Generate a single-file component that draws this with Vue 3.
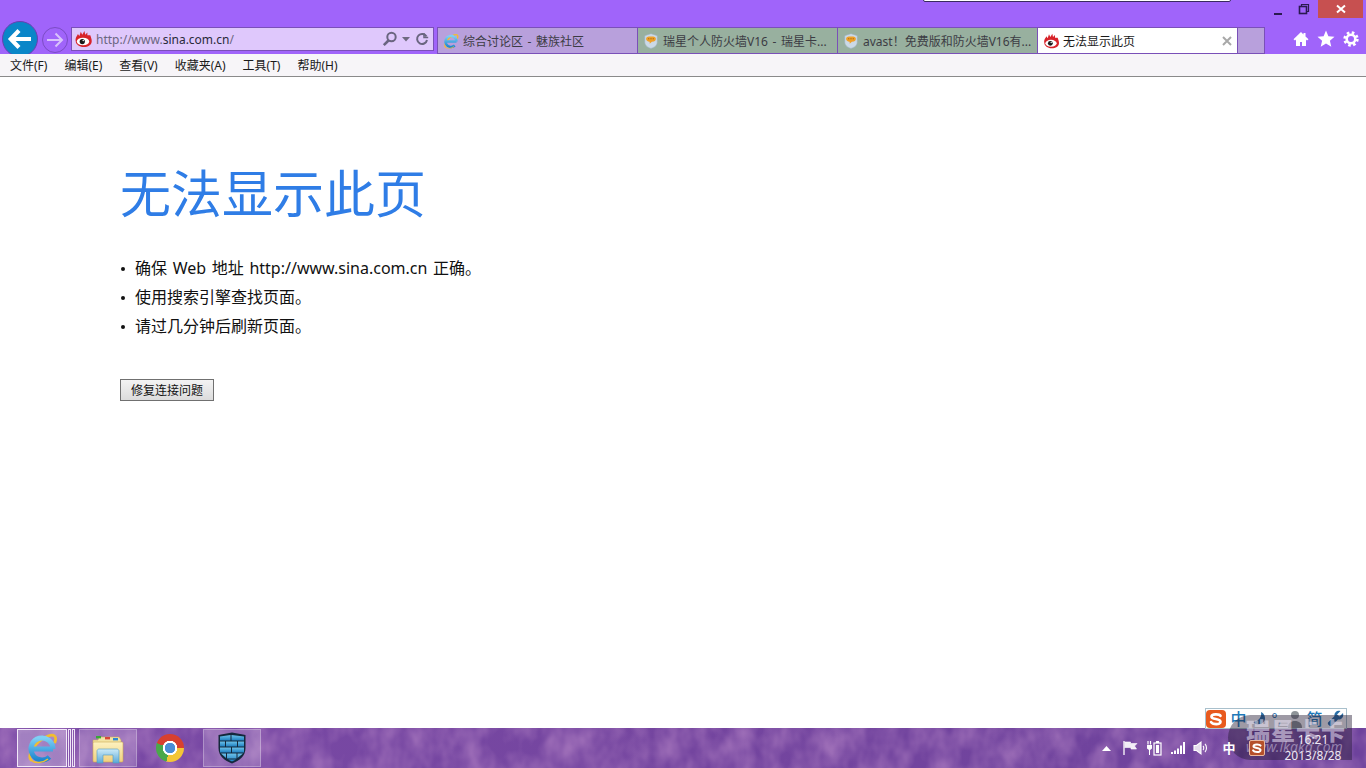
<script setup>
const menus = ['文件(F)', '编辑(E)', '查看(V)', '收藏夹(A)', '工具(T)', '帮助(H)']
const tabs = [
  { title: '综合讨论区 - 魅族社区', icon: 'ie', kind: 'lilac' },
  { title: '瑞星个人防火墙V16 - 瑞星卡...', icon: 'chat', kind: 'green' },
  { title: 'avast！免费版和防火墙V16有...', icon: 'chat', kind: 'green' },
  { title: '无法显示此页', icon: 'sina', kind: 'active' }
]
const tips = ['确保 Web 地址 http://www.sina.com.cn 正确。', '使用搜索引擎查找页面。', '请过几分钟后刷新页面。']
</script>

<template>
  <div class="screen">
    <svg class="defs" width="0" height="0" aria-hidden="true">
      <defs>
        <linearGradient id="ieBlue" x1="0" y1="0" x2="0" y2="1">
          <stop offset="0" stop-color="#7fd0f5" />
          <stop offset="1" stop-color="#1c86d0" />
        </linearGradient>
        <linearGradient id="stand" x1="0" y1="0" x2="0" y2="1">
          <stop offset="0" stop-color="#cdebf7" />
          <stop offset="1" stop-color="#5aa8d8" />
        </linearGradient>
        <linearGradient id="brick" x1="0" y1="0" x2="0" y2="1">
          <stop offset="0" stop-color="#6cc2ea" />
          <stop offset="1" stop-color="#1f7fc0" />
        </linearGradient>
        <linearGradient id="folder" x1="0" y1="0" x2="0" y2="1">
          <stop offset="0" stop-color="#fdf2c0" />
          <stop offset="1" stop-color="#f0d080" />
        </linearGradient>
        <symbol id="i-sina" viewBox="0 0 24 22">
          <path d="M2 14C1 9 4 7 5 4L7 7 9 1l2 4 3-5 1 5 3-3v4l4 0c1 3 2 5 2 8 0 5-5 8-11 8S2 18 2 14Z" fill="#d8232a" />
          <ellipse cx="12" cy="14.500" rx="8.500" ry="5.200" fill="#fff" />
          <circle cx="11" cy="14.500" r="3.600" fill="#1a1a1a" />
          <circle cx="12.300" cy="13.200" r="1" fill="#fff" />
        </symbol>
        <symbol id="i-ie" viewBox="0 0 32 32">
          <path d="M5 28C1 24 9 9 22 4c6-2 9 0 7 6" fill="none" stroke="#f0bd32" stroke-width="2.800" stroke-linecap="round" />
          <path d="M7 17H27M27 17A11 11 0 1 0 23.500 25" fill="none" stroke="url(#ieBlue)" stroke-width="5" />
          <path d="M22 27C17 31 9 32 5 28" fill="none" stroke="#f0bd32" stroke-width="1.600" />
        </symbol>
        <symbol id="i-chat" viewBox="0 0 16 18">
          <path d="M1 3 8 .8 15 3v7c0 4-3 6-7 7.400C4 16 1 14 1 10Z" fill="#cbd9e6" stroke="#9db2c4" stroke-width=".6" />
          <path d="M2.500 6.500C2.500 4.500 4 4 8 4s5.500.5 5.500 2.500S12 9.800 9 9.800L6.500 12V9.800C4 9.600 2.500 8.500 2.500 6.500Z" fill="#f0a028" />
          <path d="M5 6.500h6" stroke="#7a4a10" stroke-width="1" stroke-dasharray="1 1.500" />
        </symbol>
        <symbol id="i-sogou" viewBox="0 0 20 20">
          <path d="M15 6.500C14 4.500 5 4 5 7.500s10 1.500 10 5.500-9 3-10.500.5" fill="none" stroke="#fff" stroke-width="3" stroke-linecap="round" />
        </symbol>
      </defs>
    </svg>

    <header class="chrome">
      <div class="caption">
        <div class="other-window"></div>
        <div class="window-buttons">
          <span class="win-btn">
            <svg width="10" height="10" viewBox="0 0 10 10"><rect x="1" y="7" width="8" height="2" fill="#2a1a50" /></svg>
          </span>
          <span class="win-btn">
            <svg width="12" height="12" viewBox="0 0 12 12" fill="none" stroke="#2a1a50" stroke-width="1.200"><rect x="1.500" y="3.500" width="7" height="7" stroke-width="1.600" /><path d="M3.500 3V1.500h7v7H9" /></svg>
          </span>
          <span class="win-close">
            <svg width="10" height="10" viewBox="0 0 10 10" stroke="#fff" stroke-width="2"><path d="M1 1.500 9 8.500M9 1.500 1 8.500" /></svg>
          </span>
        </div>
      </div>

      <div class="navbar">
        <button class="back" aria-label="后退">
          <svg width="26" height="24" viewBox="0 0 26 24" fill="none" stroke="#fff" stroke-width="4.200" stroke-linejoin="miter"><path d="M12 3.500 3.800 12l8.200 8.500M4.500 12H24" /></svg>
        </button>
        <button class="forward" aria-label="前进">
          <svg width="18" height="16" viewBox="0 0 18 16" fill="none" stroke="#d9c3fb" stroke-width="2"><path d="M9.500 1.500 16 8l-6.500 6.500M15.500 8H1" /></svg>
        </button>
        <div class="address">
          <svg class="fav" width="18" height="16"><use href="#i-sina" /></svg>
          <span class="url">http://www.<b>sina.com.cn</b>/</span>
          <svg class="addr-tool" width="16" height="16" viewBox="0 0 16 16" fill="none" stroke="#6a6580" stroke-width="2"><circle cx="9.500" cy="6" r="4.200" /><path d="M6.500 9.500 1.800 14.200" stroke-width="2.600" /></svg>
          <svg class="addr-drop" width="8" height="5" viewBox="0 0 8 5"><path d="M0 0h8L4 4.500Z" fill="#6f6a80" /></svg>
          <svg class="addr-reload" width="14" height="14" viewBox="0 0 14 14" fill="none" stroke="#6a6580" stroke-width="2"><path d="M11.500 4.500A5 5 0 1 0 12 8" /><path d="M9 1v4.500h4.200" stroke-width="1.500" /></svg>
        </div>

        <div class="tabs">
          <div v-for="tab in tabs" :key="tab.title" class="tab" :class="tab.kind">
            <svg class="tab-icon" width="16" height="16"><use :href="'#i-' + tab.icon" /></svg>
            <span class="tab-title">{{ tab.title }}</span>
            <svg v-if="tab.kind === 'active'" class="tab-close" width="10" height="10" viewBox="0 0 10 10" stroke="#a8a8a8" stroke-width="2"><path d="M1 1l8 8M9 1 1 9" /></svg>
          </div>
          <div class="tab new-tab"></div>
        </div>

        <div class="tools">
          <svg width="16" height="16" viewBox="0 0 16 16" fill="#fff"><path d="M8 1 .5 8.200 2 9.500l1-.9V15h4v-4h2v4h4V8.600l1 .9 1.500-1.300L12.500 5.500V2h-2v1.600Z" /></svg>
          <svg width="18" height="17" viewBox="0 0 18 17" fill="#fff"><path d="M9 .5l2.400 5.700 6.100.5-4.600 4 1.400 6L9 13.500 3.700 16.700l1.400-6-4.600-4 6.100-.5Z" /></svg>
          <svg width="16" height="16" viewBox="0 0 16 16" fill="none" stroke="#fff"><circle cx="8" cy="8" r="4.300" stroke-width="2.600" /><circle cx="8" cy="8" r="6.200" stroke-width="3" stroke-dasharray="2.500 2.370" /></svg>
        </div>
      </div>
    </header>

    <nav class="menubar">
      <span v-for="m in menus" :key="m" class="menu-item">{{ m }}</span>
    </nav>

    <main class="page">
      <h1>无法显示此页</h1>
      <ul>
        <li v-for="t in tips" :key="t">{{ t }}</li>
      </ul>
      <button class="fix">修复连接问题</button>
    </main>

    <footer class="taskbar">
      <svg class="texture" width="1366" height="40" aria-hidden="true">
        <filter id="rock" x="0" y="0" width="100%" height="100%">
          <feTurbulence type="fractalNoise" baseFrequency="0.045 0.03" numOctaves="3" seed="11" />
          <feColorMatrix values="0 0 0 0 0.62  0 0 0 0 0.34  0 0 0 0 0.66  0.8 0 0 0 -0.25" />
        </filter>
        <rect width="1366" height="40" filter="url(#rock)" />
      </svg>

      <div class="task current">
        <svg width="32" height="32"><use href="#i-ie" /></svg>
      </div>
      <span class="sliver"></span>
      <span class="sliver"></span>
      <div class="task pinned explorer">
        <svg width="34" height="32" viewBox="0 0 34 32">
          <path d="M2 8h5l1-3h20l2 3v3H2Z" fill="#f3e4a4" stroke="#c8a860" stroke-width=".6" />
          <rect x="5" y="4" width="5" height="2.400" fill="#38a838" />
          <rect x="14" y="5" width="5" height="2.400" fill="#d84838" />
          <rect x="22" y="6" width="5" height="2.400" fill="#2f8ad0" />
          <rect x="2" y="10" width="30" height="20" rx="1" fill="url(#folder)" stroke="#cfa850" stroke-width=".6" />
          <path d="M6 31V19c0-1 1-2 2-2h18c1 0 2 1 2 2v12h-6v-8H12v8Z" fill="url(#stand)" stroke="#4f9cc4" stroke-width=".6" />
        </svg>
      </div>
      <div class="task plain"><span class="chrome-logo"></span></div>
      <div class="task pinned shield">
        <svg width="30" height="32" viewBox="0 0 30 32">
          <path d="M15 .5 28.500 3V16c0 8-6 12.500-13.500 15.500C7.500 28.500 1.500 24 1.500 16V3Z" fill="#14283c" />
          <g fill="url(#brick)">
            <path d="M3 4.500 13.500 3V8.500H3ZM14.500 3 27 4.500V8.500H14.500Z" />
            <rect x="3" y="9.500" width="5" height="5" /><rect x="9" y="9.500" width="11" height="5" /><rect x="21" y="9.500" width="6" height="5" />
            <rect x="3" y="15.500" width="11" height="5" /><rect x="15" y="15.500" width="12" height="5" />
            <path d="M4 21.500h5v4.500ZM10 21.500h9.500v5H10ZM20.500 21.500H26L20.500 26ZM11 27.500h8L15 29.500Z" />
          </g>
        </svg>
      </div>

      <div class="tray">
        <span class="tray-cell">
          <svg width="9" height="5" viewBox="0 0 9 5"><path d="M4.500 0 9 5H0Z" fill="#fff" /></svg>
        </span>
        <span class="tray-cell">
          <svg width="16" height="16" viewBox="0 0 16 16" fill="none" stroke="#fff" stroke-width="1.300"><path d="M2 1v14" /><path d="M2.500 2h6v1.500H15L12.500 6 14.500 9H9V7.500H2.500" fill="#fff" fill-opacity=".9" stroke-width=".6" /></svg>
        </span>
        <span class="tray-cell">
          <svg width="16" height="16" viewBox="0 0 16 16" fill="none" stroke="#fff"><path d="M2 1v3.500M4.500 1v3.500" stroke-width="1.200" /><path d="M1 5h5v3.500L4 10v5H3v-5L1 8.500Z" fill="#fff" stroke="none" /><rect x="8" y="3" width="7" height="12" stroke-width="1.200" /><rect x="10" y="1" width="3" height="2" fill="#fff" stroke="none" /><rect x="10" y="5" width="3" height="8" fill="#fff" stroke="none" /></svg>
        </span>
        <span class="tray-cell">
          <svg width="16" height="14" viewBox="0 0 16 14" fill="#fff"><rect x="1" y="11" width="2" height="2" /><rect x="4" y="9.500" width="2" height="3.500" /><rect x="7" y="7.500" width="2" height="5.500" /><rect x="10" y="4.500" width="2" height="8.500" /><rect x="13" y="1" width="2" height="12" /></svg>
        </span>
        <span class="tray-cell">
          <svg width="16" height="16" viewBox="0 0 16 16" fill="none" stroke="#fff" stroke-width="1.100"><path d="M1 5.500h2.500L8 2v12L3.500 10.500H1Z" fill="#fff" fill-opacity=".8" /><path d="M10 6c1 1 1 3 0 4M12 4c2 2 2 6 0 8" /></svg>
        </span>
        <span class="tray-cell ime-state">中</span>
        <span class="tray-cell">
          <svg class="sogou-tray" width="16" height="16"><use href="#i-sogou" /></svg>
        </span>
        <div class="clock">
          <span>16:21</span>
          <span>2013/8/28</span>
        </div>
      </div>
    </footer>

    <div class="watermark">
      <span class="wm-title">瑞星卡卡</span>
      <span class="wm-url">www.ikaka.com</span>
    </div>

    <div class="ime">
      <svg class="ime-logo" width="20" height="18"><use href="#i-sogou" /></svg>
      <span class="ime-word">中</span>
      <svg width="16" height="16" viewBox="0 0 16 16"><path d="M10 1c1 5-2 9-8 10 3 4 11 3 12-3 .4-3-1.500-6-4-7Z" fill="#2a6fa8" /></svg>
      <span class="ime-mark">°,</span>
      <svg width="14" height="18" viewBox="0 0 14 18" fill="#8e9498"><circle cx="7" cy="5" r="4" /><path d="M0 18c0-5 3-7 7-7s7 2 7 7Z" /></svg>
      <span class="ime-word">简</span>
      <svg width="17" height="17" viewBox="0 0 17 17" fill="#2a6fa8"><path d="M16 3 12.500 6.500 10 4.500 13.500 1C10.500 0 7 2 7.500 6L1 12.500c-1 1.500 2 4.500 3.500 3.500L11 9.500c4 .5 6-3 5-6.500Z" /></svg>
    </div>
  </div>
</template>

<style>
html, body { margin: 0; overflow: hidden; background: #fff; }
</style>

<style scoped>
.screen {
  position: relative;
  display: flex;
  flex-direction: column;
  width: 1366px;
  height: 768px;
  overflow: hidden;
  font-family: "Noto Sans", "Noto Sans CJK SC", sans-serif;
  color: #1a1a1a;
}
.defs { position: absolute; }

/* browser chrome */
.chrome {
  height: 54px;
  background: #a064fa;
  overflow: hidden;
  flex: none;
}
.caption {
  position: relative;
  height: 27px;
  display: flex;
  justify-content: flex-end;
}
.other-window {
  position: absolute;
  left: 923px;
  top: -4px;
  width: 306px;
  height: 4px;
  background: #fff;
  border: 1px solid #3a2a60;
  border-radius: 0 0 2px 2px;
}
.window-buttons {
  display: flex;
  align-items: flex-start;
  margin-right: 3px;
}
.win-btn {
  width: 20px;
  height: 18px;
  display: flex;
  align-items: center;
  justify-content: center;
}
.win-btn:nth-child(1) { margin-right: 6px; padding-top: 4px; height: 14px; }
.win-btn:nth-child(2) { margin-right: 4px; }
.win-close {
  width: 45px;
  height: 18px;
  background: #c75050;
  display: flex;
  align-items: center;
  justify-content: center;
}
.navbar {
  position: relative;
  display: flex;
  align-items: flex-start;
  height: 27px;
}
.back {
  position: absolute;
  left: 2px;
  top: -6px;
  width: 36px;
  height: 36px;
  padding: 0;
  border: 1px solid #6a3fb0;
  border-radius: 50%;
  background: #0a86c8;
  display: flex;
  align-items: center;
  justify-content: center;
}
.forward {
  position: absolute;
  left: 42px;
  top: 0;
  width: 26px;
  height: 26px;
  padding: 0;
  border: 1px solid #7b4cc4;
  border-radius: 50%;
  background: transparent;
  display: flex;
  align-items: center;
  justify-content: center;
}
.address {
  box-sizing: border-box;
  margin-left: 71px;
  width: 363px;
  height: 24px;
  border: 1px solid #7a50b8;
  background: #dfc8fc;
  display: flex;
  align-items: center;
  font-size: 13px;
  color: #6b6680;
}
.fav { margin-left: 2px; margin-right: 4px; flex: none; }
.url { flex: 1; white-space: nowrap; font-size: 12px; }
.url b { font-weight: 400; color: #2a2a3a; }
.addr-tool { margin-right: 1px; }
.addr-drop { margin-right: 5px; margin-left: 3px; }
.addr-reload { margin-right: 4px; }
.tabs {
  margin-left: 3px;
  display: flex;
  height: 27px;
}
.tab {
  box-sizing: border-box;
  width: 200px;
  height: 27px;
  border: 1px solid #7a50b8;
  border-right-width: 0;
  display: flex;
  align-items: center;
  padding-left: 5px;
  font-size: 12px;
  color: #3c3c44;
}
.tab.lilac, .tab.new-tab { background: #b8a0dc; }
.tab.green { background: #98b09f; }
.tab.active { background: #fff; color: #1a1a1a; }
.tab.new-tab { width: 28px; border-right-width: 1px; }
.tab-icon { flex: none; margin-right: 4px; }
.tab-title { flex: 1; white-space: nowrap; overflow: hidden; word-spacing: 1.500px; }
.tab-close { margin-right: 5px; }
.tools {
  margin-left: 28px;
  padding-top: 3px;
  display: flex;
  align-items: center;
  gap: 8px;
}

/* menu */
.menubar {
  box-sizing: border-box;
  flex: none;
  height: 23px;
  padding-left: 1.500px;
  background: #f7f5f8;
  border-bottom: 1px solid #8a8a8a;
  display: flex;
  align-items: center;
  font-size: 12px;
}
.menu-item { padding: 0 8.500px; white-space: nowrap; }

/* error page */
.page {
  flex: 1;
  background: #fff;
  padding: 83px 0 0 120px;
}
h1 {
  margin: 0;
  font-size: 51px;
  line-height: 66px;
  font-weight: 400;
  color: #2f7de6;
}
ul {
  margin: 28px 0 0;
  padding: 0;
  list-style: none;
  font-size: 16px;
  line-height: 29px;
  word-spacing: 1.500px;
  color: #111;
}
li {
  display: flex;
  align-items: center;
}
li::before {
  content: "";
  width: 4px;
  height: 4px;
  margin: 0 10px 0 1px;
  border-radius: 50%;
  background: #111;
  flex: none;
}
.fix {
  display: block;
  box-sizing: border-box;
  width: 94px;
  height: 22px;
  margin-top: 38px;
  padding: 0;
  border: 1px solid #707070;
  background: linear-gradient(#f3f3f3, #dcdcdc);
  font: 12px "Noto Sans", "Noto Sans CJK SC", sans-serif;
  color: #111;
}

/* taskbar */
.taskbar {
  position: relative;
  flex: none;
  height: 40px;
  box-sizing: border-box;
  padding-left: 17px;
  display: flex;
  align-items: center;
  background: linear-gradient(90deg, #7a4aa6, #74459f 50%, #6d429c);
}
.texture { position: absolute; left: 0; top: 0; }
.task {
  position: relative;
  box-sizing: border-box;
  height: 38px;
  display: flex;
  align-items: center;
  justify-content: center;
  flex: none;
}
.current {
  width: 50px;
  border: 1px solid #f2e8f8;
  background: rgba(255, 255, 255, .3);
}
.sliver {
  position: relative;
  box-sizing: border-box;
  width: 3px;
  height: 38px;
  margin-left: 1px;
  border: 1px solid #efe4f6;
  flex: none;
}
.pinned {
  border: 1px solid rgba(255, 255, 255, .28);
  background: rgba(255, 255, 255, .17);
  width: 58px;
}
.explorer { margin-left: 4px; }
.plain { width: 66px; }
.chrome-logo {
  width: 28px;
  height: 28px;
  border-radius: 50%;
  background:
    radial-gradient(circle, #4a8ed6 0 5px, #fff 5.500px 7px, transparent 7.500px),
    conic-gradient(from 290deg, #d8402e 0 160deg, #f4c636 160deg 265deg, #4aa84a 265deg 360deg);
}
.tray {
  position: relative;
  z-index: 4;
  margin-left: auto;
  margin-right: 23px;
  display: flex;
  align-items: center;
  height: 40px;
}
.tray-cell {
  width: 24px;
  display: flex;
  align-items: center;
  justify-content: center;
  flex: none;
}
.tray-cell:nth-child(4) { width: 23px; }
.tray-cell:nth-child(5) { margin-right: 2px; }
.tray-cell:nth-child(6), .tray-cell:nth-child(7) { width: 28px; }
.ime-state {
  color: #fff;
  font-size: 13px;
  line-height: 16px;
  font-weight: 700;
}
.sogou-tray {
  background: #b5502a;
  border: 1px solid #e8b8a0;
  box-sizing: border-box;
  border-radius: 2px;
}
.clock {
  width: 60px;
  margin-left: 12px;
  display: flex;
  flex-direction: column;
  align-items: center;
  font-size: 12px;
  line-height: 16px;
  color: #efe8f4;
  white-space: nowrap;
}

/* floating overlays */
.watermark {
  position: absolute;
  left: 1228px;
  top: 715px;
  box-sizing: border-box;
  width: 124px;
  height: 45px;
  padding: 3px 0 0 18px;
  border-radius: 24px 0 0 24px;
  background: rgba(34, 26, 50, .44);
  display: flex;
  flex-direction: column;
  z-index: 3;
}
.wm-title {
  font-size: 24px;
  line-height: 26px;
  font-weight: 900;
  letter-spacing: 1px;
  white-space: nowrap;
  color: rgba(238, 232, 250, .55);
}
.wm-url {
  margin-top: -5px;
  font-size: 14px;
  line-height: 16px;
  font-style: italic;
  white-space: nowrap;
  color: rgba(220, 210, 235, .5);
}
.ime {
  position: absolute;
  left: 1205px;
  top: 708px;
  box-sizing: border-box;
  width: 142px;
  height: 21px;
  padding: 0;
  background: #fff;
  border: 1px solid #a9c0cc;
  display: flex;
  align-items: center;
  gap: 4.500px;
  z-index: 2;
}
.ime-logo {
  background: #e85a1e;
  border-radius: 4px;
  flex: none;
}
.ime-word {
  font-size: 16px;
  line-height: 18px;
  color: #1f79b8;
  font-weight: 500;
}
.ime-mark { width: 12px; font-size: 14px; color: #2a6fa8; line-height: 14px; }
</style>
